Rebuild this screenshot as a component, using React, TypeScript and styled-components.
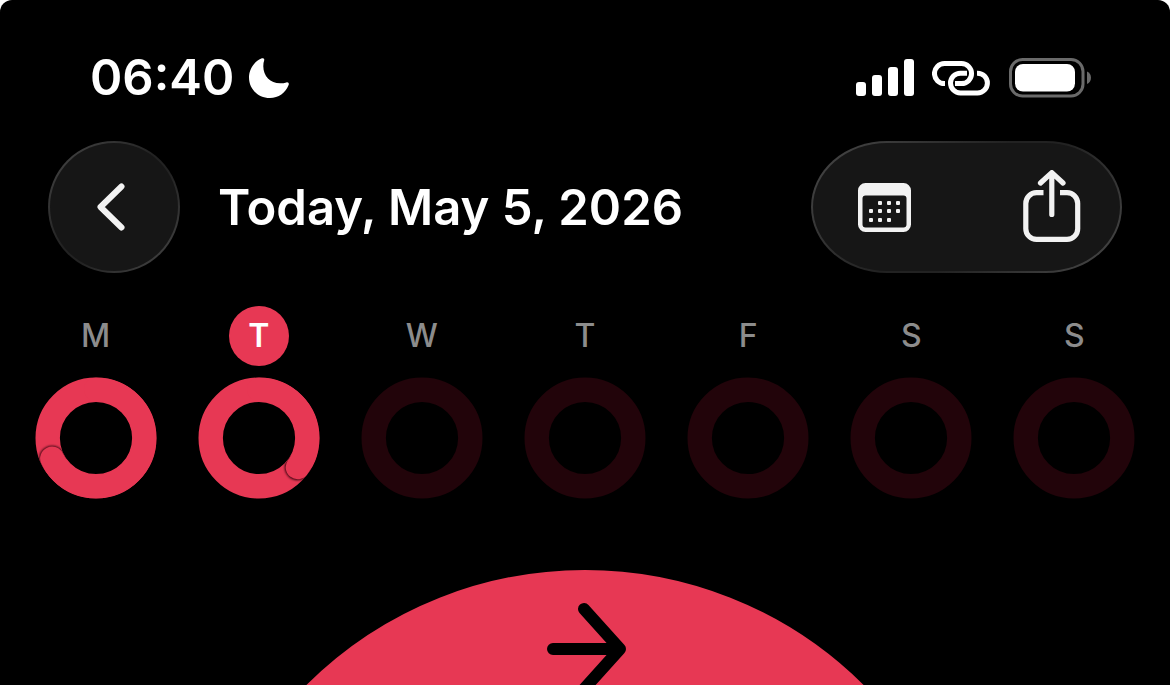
import { useId } from 'react'
import styled, { createGlobalStyle } from 'styled-components'

const colors = {
  black: '#000000',
  white: '#ffffff',
  glyph: '#f2f2f2',
  glass: '#161616',
  muted: '#8c8c8c',
  accent: '#e73854',
  accentDim: '#22040a'
}

const GlobalStyle = createGlobalStyle`
  body {
    margin: 0;
    background: ${colors.white};
    font-family: Inter, 'Liberation Sans', sans-serif;
    -webkit-font-smoothing: antialiased;
  }

  svg {
    display: block;
    flex: none;
  }
`

const Screen = styled.main`
  display: flex;
  flex-direction: column;
  height: 100vh;
  overflow: hidden;
  background: ${colors.black};
  color: ${colors.white};
  border-radius: 12px 12px 0 0;
`

const StatusBar = styled.div`
  display: flex;
  align-items: center;
  justify-content: space-between;
  flex: none;
  padding: 58px 79px 0 90px;
`

const StatusGroup = styled.div`
  display: flex;
  align-items: center;
  gap: 18px;
`

const Clock = styled.time`
  display: flex;
  align-items: center;
  gap: 15px;
  font-size: 49px;
  font-weight: 600;
  line-height: 40px;
`

const Toolbar = styled.header`
  display: flex;
  align-items: center;
  flex: none;
  margin-top: 43px;
  padding: 0 48px;
`

const glass = `
  box-sizing: border-box;
  height: 132px;
  border: 2px solid transparent;
  background:
    linear-gradient(${colors.glass}, ${colors.glass}) padding-box,
    linear-gradient(135deg, #404040 10%, #222222 45%, #222222 58%, #404040 90%) border-box;
`

const BackButton = styled.button`
  ${glass}
  display: flex;
  align-items: center;
  justify-content: center;
  width: 132px;
  padding: 0 6px 0 0;
  border-radius: 50%;
  color: ${colors.glyph};
  cursor: pointer;
`

const Title = styled.h1`
  flex: 1;
  margin: 0 0 0 38px;
  padding-top: 2px;
  font-size: 49px;
  font-weight: 600;
  line-height: 60px;
  white-space: nowrap;
`

const Actions = styled.div`
  ${glass}
  display: flex;
  align-items: center;
  gap: 112px;
  padding: 0 39px 0 45px;
  border-radius: 76px / 66px;
`

const ActionButton = styled.button`
  padding: 0;
  border: 0;
  background: none;
  color: ${colors.glyph};
  cursor: pointer;
`

const Week = styled.ol`
  display: grid;
  grid-template-columns: repeat(7, 1fr);
  flex: none;
  margin: 33px 0 0;
  padding: 0 14px;
  list-style: none;
`

const Day = styled.li`
  display: flex;
  flex-direction: column;
  align-items: center;
  gap: 11px;
`

const DayLabel = styled.span<{ $selected: boolean }>`
  width: 60px;
  border-radius: 50%;
  background: ${({ $selected }) => ($selected ? colors.accent : 'transparent')};
  color: ${({ $selected }) => ($selected ? colors.white : colors.muted)};
  font-size: 32px;
  font-weight: ${({ $selected }) => ($selected ? 600 : 500)};
  line-height: 60px;
  text-align: center;
`

const Hero = styled.section`
  display: flex;
  justify-content: center;
  margin-top: 71px;
`

// progress is in laps: 1.5 means the ring is closed and half way round again
const week = [
  { letter: 'M', progress: 1.68 },
  { letter: 'T', progress: 1.353, selected: true },
  { letter: 'W', progress: 0 },
  { letter: 'T', progress: 0 },
  { letter: 'F', progress: 0 },
  { letter: 'S', progress: 0 },
  { letter: 'S', progress: 0 }
]

const dots = [
  [22, 20], [31, 20], [40, 20],
  [13, 28], [22, 28], [31, 28], [40, 28],
  [13, 37], [22, 37], [31, 37]
]

function MoonIcon (): JSX.Element {
  return (
    <svg width='40' height='40' viewBox='0 0 40 40' fill='currentColor' aria-hidden='true'>
      <path d='M12.3 .5C13.9-.3 15.600 .4 15.200 2.200C14.600 4 14.300 6 14.300 8.300C14.300 18.200 21.200 25.300 31.200 25.300C33.600 25.300 35.600 25 37.400 24.400C39.300 23.900 40.300 25.400 39.600 27C36.700 34.700 29.500 40 20.900 40C9.200 40 0 31.100 0 19.500C0 11 5 3.700 12.300 .5Z' />
    </svg>
  )
}

function SignalIcon (): JSX.Element {
  return (
    <svg width='58' height='38' viewBox='0 0 58 38' fill='currentColor' role='img' aria-label='Signal'>
      <rect x='0' y='23' width='10' height='14' rx='3' />
      <rect x='16' y='16' width='10' height='21' rx='3' />
      <rect x='32' y='8' width='10' height='29' rx='3' />
      <rect x='48' y='0' width='10' height='37' rx='3' />
    </svg>
  )
}

function LinkIcon (): JSX.Element {
  return (
    <svg width='59' height='36' viewBox='0 0 59 36' fill='none' stroke='currentColor' strokeWidth='5' role='img' aria-label='Linked'>
      <path d='M13 23.600H12.500A10 10 0 0 1 12.500 3.500H29.500A10 10 0 0 1 29.500 23.600H23' />
      <path d='M45 13.200H45.500A9.900 9.900 0 0 1 45.500 33H28.400A9.900 9.900 0 0 1 28.400 13.200H35' />
    </svg>
  )
}

function BatteryIcon (): JSX.Element {
  return (
    <svg width='82' height='40' viewBox='0 0 82 40' role='img' aria-label='Battery'>
      <rect x='1.500' y='1.500' width='72.500' height='36.500' rx='12' fill='none' stroke='#6a6a6a' strokeWidth='3' />
      <rect x='6' y='6' width='60' height='27.500' rx='8' fill='currentColor' />
      <path d='M78 13.500C80.600 14.600 82 17 82 19.800S80.600 25 78 26Z' fill='#6a6a6a' />
    </svg>
  )
}

function ChevronIcon (): JSX.Element {
  return (
    <svg width='28' height='50' viewBox='0 0 28 50' fill='none' stroke='currentColor' strokeWidth='6' strokeLinecap='round' strokeLinejoin='round' aria-hidden='true'>
      <path d='M24.500 4.500L3.500 25L24.500 45.500' />
    </svg>
  )
}

function CalendarIcon (): JSX.Element {
  return (
    <svg width='53' height='49' viewBox='0 0 53 49' fill='currentColor' aria-hidden='true'>
      <path fillRule='evenodd' d='M7.500 0H45.500A7.500 7.500 0 0 1 53 7.500V41.500A7.500 7.500 0 0 1 45.500 49H7.500A7.500 7.500 0 0 1 0 41.500V7.500A7.500 7.500 0 0 1 7.500 0ZM7.500 12.500A3 3 0 0 0 4.500 15.500V41.500A3 3 0 0 0 7.500 44.500H45.500A3 3 0 0 0 48.500 41.500V15.500A3 3 0 0 0 45.500 12.500Z' />
      {dots.map(([x, y]) => (
        <rect key={`${x}-${y}`} x={x - 2} y={y - 2} width='4' height='4' rx='1' />
      ))}
    </svg>
  )
}

function ShareIcon (): JSX.Element {
  return (
    <svg width='58' height='74' viewBox='0 0 58 74' fill='none' stroke='currentColor' strokeWidth='5.200' aria-hidden='true'>
      <path d='M20.500 22.700H13.500A10.700 10.700 0 0 0 2.800 33.400V58.700A10.700 10.700 0 0 0 13.500 69.400H44A10.700 10.700 0 0 0 54.700 58.700V33.400A10.700 10.700 0 0 0 44 22.700H37' />
      <path strokeLinecap='round' strokeLinejoin='round' d='M28.800 44.500V2.800M17.500 13L28.800 2.600L40 13' />
    </svg>
  )
}

function DayRing ({ progress }: { progress: number }): JSX.Element {
  const clipId = useId()
  const angle = (progress % 1) * 2 * Math.PI
  const x = 61 + 48.5 * Math.sin(angle)
  const y = 61 - 48.5 * Math.cos(angle)
  const largeArc = angle > Math.PI ? 1 : 0

  return (
    <svg width='122' height='122' viewBox='0 0 122 122' fill='none' aria-hidden='true'>
      <circle cx='61' cy='61' r='48.3' stroke={progress > 0 ? colors.accent : colors.accentDim} strokeWidth='24.4' />
      {progress > 1 && (
        <>
          <clipPath id={clipId}>
            <path clipRule='evenodd' d='M.5 61A60.5 60.5 0 0 1 121.500 61A60.5 60.5 0 0 1 .5 61ZM24.500 61A36.5 36.5 0 0 0 97.500 61A36.5 36.5 0 0 0 24.500 61Z' />
          </clipPath>
          <g clipPath={`url(#${clipId})`}>
            <circle cx={x} cy={y} r='13' fill='#3a0510' style={{ filter: 'blur(1px)' }} />
            <path d={`M61 12.5A48.5 48.5 0 ${largeArc} 1 ${x} ${y}`} stroke={colors.accent} strokeWidth='24' strokeLinecap='round' />
          </g>
        </>
      )}
    </svg>
  )
}

function HeroRing (): JSX.Element {
  return (
    <svg width='790' height='790' viewBox='0 0 790 790' fill='none' role='img' aria-label='Move'>
      <circle cx='395' cy='395' r='316' stroke={colors.accent} strokeWidth='158' />
      <path d='M363 79H430M394 39L430 79L394 119' stroke={colors.black} strokeWidth='12' strokeLinecap='round' strokeLinejoin='round' />
    </svg>
  )
}

function App (): JSX.Element {
  return (
    <>
      <GlobalStyle />
      <Screen>
        <StatusBar>
          <Clock>
            06:40
            <MoonIcon />
          </Clock>
          <StatusGroup>
            <SignalIcon />
            <LinkIcon />
            <BatteryIcon />
          </StatusGroup>
        </StatusBar>
        <Toolbar>
          <BackButton type='button' aria-label='Back'>
            <ChevronIcon />
          </BackButton>
          <Title>Today, May 5, 2026</Title>
          <Actions>
            <ActionButton type='button' aria-label='Calendar'>
              <CalendarIcon />
            </ActionButton>
            <ActionButton type='button' aria-label='Share'>
              <ShareIcon />
            </ActionButton>
          </Actions>
        </Toolbar>
        <Week>
          {week.map(({ letter, progress, selected = false }, index) => (
            <Day key={index}>
              <DayLabel $selected={selected}>{letter}</DayLabel>
              <DayRing progress={progress} />
            </Day>
          ))}
        </Week>
        <Hero>
          <HeroRing />
        </Hero>
      </Screen>
    </>
  )
}

export default App
